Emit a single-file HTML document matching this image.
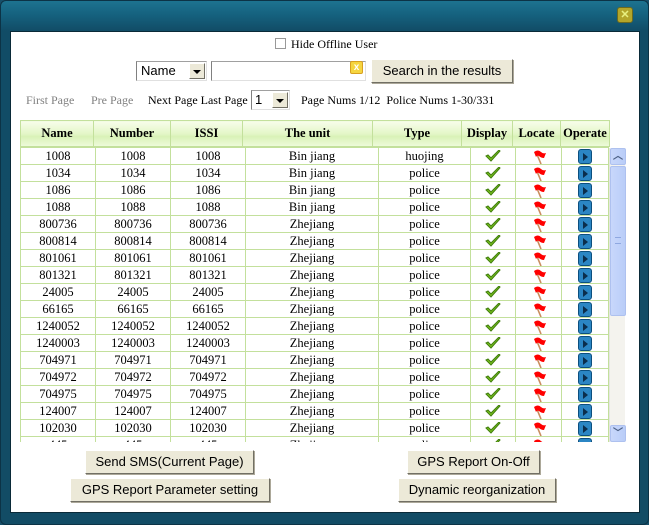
<!DOCTYPE html>
<html><head><meta charset="utf-8"><style>
*{margin:0;padding:0;box-sizing:border-box}
body{width:649px;height:525px;overflow:hidden;background:#174f69;font-family:"Liberation Serif",serif;font-size:12px;position:relative}
.frame{position:absolute;left:0;top:0;width:649px;height:525px;border-radius:6px;background:linear-gradient(#1d7390 0,#15617e 14px,#114c66 30px,#124c65 100%);border:1px solid #0c3346}
.inner{position:absolute;left:10px;top:31px;width:630px;height:482px;background:#fff;border:1px solid #0a2a38}
.abs{position:absolute}
.close{left:617px;top:7px;width:16px;height:16px;background:#b3a62a;border:1px solid #6c6a1e;border-radius:3px;color:#e8f080;font:bold 11px "Liberation Sans",sans-serif;text-align:center;line-height:14px}
.btn{position:absolute;background:#ece9d8;border:1px solid;border-color:#fff #716f64 #716f64 #fff;box-shadow:1px 1px 0 #aca899;font:13px "Liberation Sans",sans-serif;color:#000;text-align:center}
.sel{position:absolute;border:1px solid #7f9db9;border-color:#a0a0a0 #e0e0e0 #e0e0e0 #808080;background:#fff;font:13px "Liberation Sans",sans-serif}
.dd{position:absolute;right:1px;top:1px;bottom:1px;width:16px;background:#ece9d8;border:1px solid;border-color:#fff #716f64 #716f64 #fff}
.dd:after{content:"";position:absolute;left:3px;top:6px;border:4px solid transparent;border-top:4px solid #000;border-bottom:0}
table{border-collapse:collapse;table-layout:fixed;position:absolute}
th{height:26px;border:1px solid #c3e09c;background:linear-gradient(#f7fdea,#e3f6c7 50%,#d9f2b7 60%,#eefbdb);font-weight:bold;font-size:12.5px}
td{height:17px;border:1px solid #c3e09c;text-align:center;font-size:12.5px;padding:0;line-height:15px;white-space:nowrap;overflow:hidden}
td svg{display:block;margin:0 auto}
.op{display:block;margin:0 auto;width:14px;height:15px;background:#2b86c4;border:1px solid #0c4f7e;border-radius:3px;position:relative}
.op:after{content:"";position:absolute;left:4px;top:3px;border:4px solid transparent;border-left:5px solid #0b2e4c;border-right:0}
.sb{position:absolute;left:609px;top:148px;width:16px;height:294px;background:#f4f3ee;border-left:1px solid #e6e6e0}
.sbb{position:absolute;left:0;width:16px;background:linear-gradient(90deg,#c8d7fb,#b9cdf8);border:1px solid #aec1ef;border-radius:2px}
</style></head><body>
<div class="frame"></div>
<div class="abs close">✕</div>
<div class="inner"></div>
<div class="abs" style="left:275px;top:38px;width:11px;height:11px;border:1px solid #999;background:#fff"></div>
<div class="abs" style="left:291px;top:37px;font-size:12px">Hide Offline User</div>
<div class="sel" style="left:136px;top:61px;width:71px;height:20px;padding:2px 4px;line-height:14px">Name<div class="dd"></div></div>
<div class="sel" style="left:211px;top:61px;width:155px;height:20px"></div>
<div class="abs" style="left:350px;top:61px;width:13px;height:13px;background:#f5d540;border:1px solid #d8a020;border-radius:2px;color:#fff;font:bold 10px sans-serif;text-align:center;line-height:11px">x</div>
<div class="btn" style="left:371px;top:59px;width:142px;height:24px;line-height:22px">Search in the results</div>
<div class="abs" style="left:26px;top:93px;color:#808080">First Page</div>
<div class="abs" style="left:91px;top:93px;color:#808080">Pre Page</div>
<div class="abs" style="left:148px;top:93px">Next Page Last Page</div>
<div class="sel" style="left:251px;top:90px;width:39px;height:20px;padding:2px 3px;line-height:14px">1<div class="dd"></div></div>
<div class="abs" style="left:301px;top:93px">Page Nums 1/12&nbsp; Police Nums 1-30/331</div>
<table style="left:20px;top:120px;width:589px">
<colgroup><col style="width:73px"><col style="width:77px"><col style="width:72px"><col style="width:130px"><col style="width:89px"><col style="width:51px"><col style="width:48px"><col style="width:49px"></colgroup>
<tr><th>Name</th><th>Number</th><th>ISSI</th><th>The unit</th><th>Type</th><th>Display</th><th>Locate</th><th>Operate</th></tr></table>
<div class="abs" style="left:20px;top:147px;width:589px;height:295px;overflow:hidden">
<table style="left:0;top:0;width:588px">
<colgroup><col style="width:75px"><col style="width:75px"><col style="width:75px"><col style="width:133px"><col style="width:92px"><col style="width:45px"><col style="width:46px"><col style="width:47px"></colgroup>
<tbody id="tb"></tbody></table></div>
<div class="sb">
<div class="sbb" style="top:0;height:17px;text-align:center;color:#4d6185;font:bold 10px sans-serif;line-height:15px">︿</div>
<div class="sbb" style="top:18px;height:150px"><div style="position:absolute;left:4px;top:70px;width:6px;height:7px;border-top:1px solid #8fa8e0;border-bottom:1px solid #8fa8e0"></div></div>
<div class="sbb" style="top:277px;height:17px;text-align:center;color:#4d6185;font:bold 10px sans-serif;line-height:15px">﹀</div>
</div>
<div class="btn" style="left:85px;top:450px;width:169px;height:24px;line-height:22px">Send SMS(Current Page)</div>
<div class="btn" style="left:407px;top:450px;width:133px;height:24px;line-height:22px">GPS Report On-Off</div>
<div class="btn" style="left:70px;top:478px;width:200px;height:24px;line-height:22px">GPS Report Parameter setting</div>
<div class="btn" style="left:398px;top:478px;width:158px;height:24px;line-height:22px">Dynamic reorganization</div>
<script>
var d=[["1008","Bin jiang","huojing"],["1034","Bin jiang","police"],["1086","Bin jiang","police"],["1088","Bin jiang","police"],["800736","Zhejiang","police"],["800814","Zhejiang","police"],["801061","Zhejiang","police"],["801321","Zhejiang","police"],["24005","Zhejiang","police"],["66165","Zhejiang","police"],["1240052","Zhejiang","police"],["1240003","Zhejiang","police"],["704971","Zhejiang","police"],["704972","Zhejiang","police"],["704975","Zhejiang","police"],["124007","Zhejiang","police"],["102030","Zhejiang","police"],["445","Zhejiang","police"]];
var flag='<svg width="16" height="15" viewBox="0 0 16 15"><path d="M5 3 L10 15" stroke="#c98d5e" stroke-width="1.6"/><path d="M3 3 Q7 0 10 3 Q12 5 15 4 L13 9 Q10 9 8 7 Q6 6 5 8Z" fill="#f00"/></svg>';
var chk='<svg width="16" height="13" viewBox="0 0 16 13"><path d="M1 6 L6 11 L15 1 L14 0 L6 8 L3 5Z" fill="#7bc21e" stroke="#3f7d0c" stroke-width="1"/></svg>';
var h="";d.forEach(function(r){h+="<tr><td>"+r[0]+"</td><td>"+r[0]+"</td><td>"+r[0]+"</td><td>"+r[1]+"</td><td>"+r[2]+'</td><td>'+chk+'</td><td>'+flag+'</td><td><span class="op"></span></td></tr>'});
document.getElementById("tb").innerHTML=h;
</script>
</body></html>
